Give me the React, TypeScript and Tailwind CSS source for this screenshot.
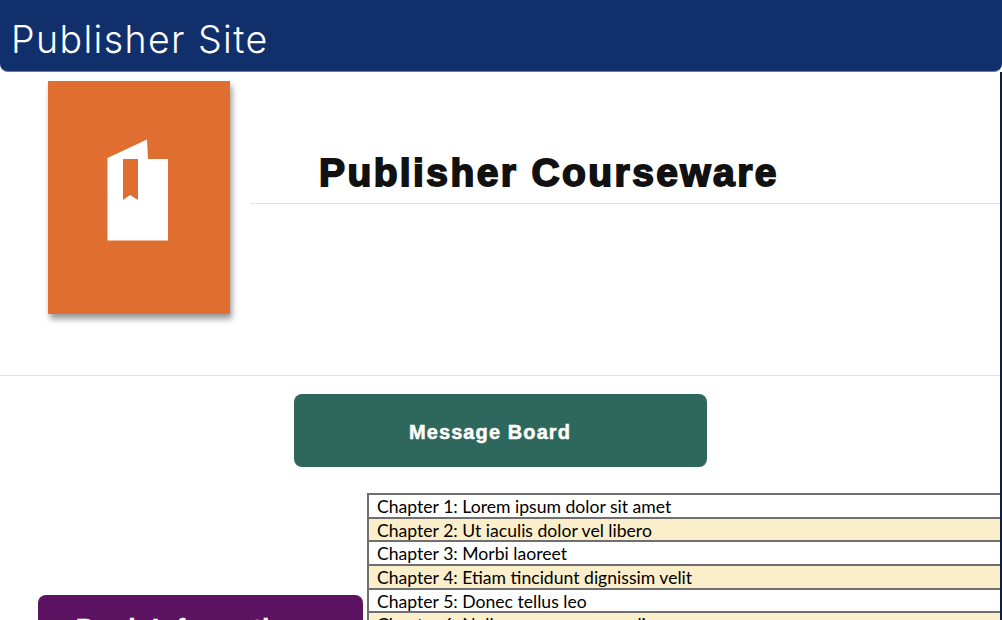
const chapters = [
  'Chapter 1: Lorem ipsum dolor sit amet',
  'Chapter 2: Ut iaculis dolor vel libero',
  'Chapter 3: Morbi laoreet',
  'Chapter 4: Etiam tincidunt dignissim velit',
  'Chapter 5: Donec tellus leo',
  'Chapter 6: Nulla congue cursus odio',
];

function BookIcon() {
  return (
    <svg width="62" height="102" viewBox="0 0 62 102" className="mt-[58px] -ml-[2px]">
      <path
        d="M0.5 19 L40 0.5 L41 20 H61 V101.5 H0.5 Z M16 20 V61 L23 56 L31 61 V20 Z"
        fill="#ffffff"
        fillRule="evenodd"
      />
    </svg>
  );
}

export default function App() {
  return (
    <div className="h-[620px] w-[1002px] overflow-hidden bg-white">
      <header className="flex h-[72px] items-center rounded-b-lg border-b border-[#5f7fa8] bg-[#102f6b] pt-[10px] pl-[11px]">
        <h1 className="font-['Inter',sans-serif] text-[37.5px] font-light tracking-[1.4px] text-white">Publisher Site</h1>
      </header>

      <div className="border-r-2 border-[#10203f]">
        <section className="flex h-[304px] border-b border-[#e3e3e3] pl-12 pt-[9px]">
          <div className="flex h-[233px] w-[182px] shrink-0 justify-center bg-[#e06e30] shadow-[2px_5px_6px_rgba(0,0,0,0.4)]">
            <BookIcon />
          </div>
          <div className="ml-5 h-[123px] flex-1 border-b border-[#e3e3e3] pl-[69px] pt-[69px]">
            <h2 className="font-['Liberation_Sans',sans-serif] text-[39px] leading-[46px] font-black tracking-[2.4px] text-[#111111] [-webkit-text-stroke:1.8px_#111111]">
              Publisher Courseware
            </h2>
          </div>
        </section>

        <div className="flex justify-center pt-[18px]">
          <button className="h-[73px] w-[413px] rounded-lg bg-[#2e675b] pt-[3px] pr-[20px] font-['Liberation_Sans',sans-serif] text-[20px] font-bold tracking-[1.1px] text-white [-webkit-text-stroke:0.5px_#ffffff]">
            Message Board
          </button>
        </div>

        <section className="flex items-start pt-[26px] pl-[38px]">
          <div className="mt-[102px] mr-[5px] h-[60px] w-[325px] shrink-0 rounded-t-lg bg-[#5c1361] pt-[15px] pl-[38px] font-['Liberation_Sans',sans-serif] text-[25px] font-bold tracking-[1.3px] text-white [-webkit-text-stroke:0.5px_#ffffff]">
            Book Information
          </div>
          <div className="-ml-[1px] flex-1 border-t-2 border-l-2 border-[#6f6f6f]">
            {chapters.map((chapter, i) => (
              <div
                key={chapter}
                className={`h-[23.7px] border-b-2 border-[#6f6f6f] pl-2 font-['Lato',sans-serif] text-[17.6px] leading-[23px] text-black ${
                  i % 2 === 1 ? 'bg-[#faeecb]' : 'bg-white'
                }`}
              >
                {chapter}
              </div>
            ))}
          </div>
        </section>
      </div>
    </div>
  );
}
